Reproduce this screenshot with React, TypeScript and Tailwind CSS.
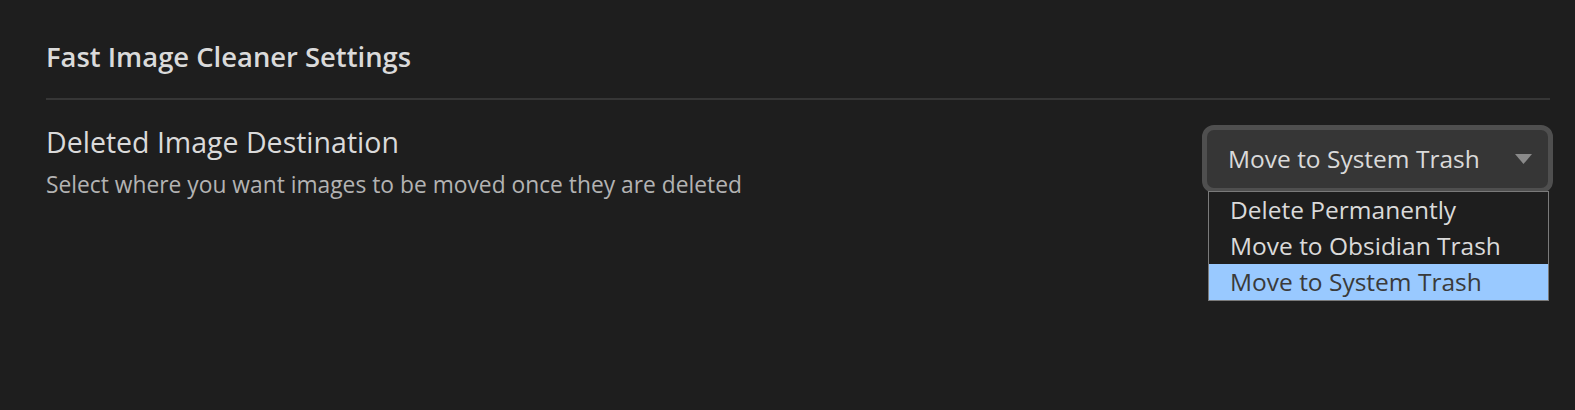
const options = ["Delete Permanently", "Move to Obsidian Trash", "Move to System Trash"];

export default function App() {
  const selected = "Move to System Trash";
  return (
    <div
      className="min-h-[410px] w-full bg-[#1e1e1e] pl-[46px] pr-[22px] pt-[39px]"
      style={{ fontFamily: '"Open Sans", "Noto Sans", sans-serif' }}
    >
      <h2 className="text-[27.4px] leading-[36px] font-semibold text-[#dadada]">Fast Image Cleaner Settings</h2>
      <div className="mt-[23px] mr-[3px] h-[2px] bg-[#363636]" />

      <div className="mt-[25px] flex items-start justify-between">
        <div>
          <div className="text-[28.5px] leading-[34px] text-[#dadada]">Deleted Image Destination</div>
          <div className="mt-[12px] text-[22.8px] leading-[28px] text-[#b3b3b3]">
            Select where you want images to be moved once they are deleted
          </div>
        </div>

        <div className="relative mt-0 w-[351px]">
          <div className="flex h-[68px] items-center justify-between rounded-[12px] border-[5px] border-[#4f4f4f] bg-[#363636] pl-[21px] pr-[16px]">
            <span className="text-[24.5px] text-[#dadada]">{selected}</span>
            <svg width="17" height="10" viewBox="0 0 17 10">
              <path d="M0 0 H17 L8.5 10 Z" fill="#8a8a8a" />
            </svg>
          </div>
          <div className="absolute left-[6px] right-[4px] top-[66px] border border-[#7a7a7a] bg-[#1e1e1e]">
            {options.map((o) => (
              <div
                key={o}
                className={
                  o === selected
                    ? "h-[36px] bg-[#99c9ff] pl-[21px] text-[24.5px] leading-[36px] text-[#3a3a3a]"
                    : "h-[36px] pl-[21px] text-[24.5px] leading-[36px] text-[#dadada]"
                }
              >
                {o}
              </div>
            ))}
          </div>
        </div>
      </div>
    </div>
  );
}
